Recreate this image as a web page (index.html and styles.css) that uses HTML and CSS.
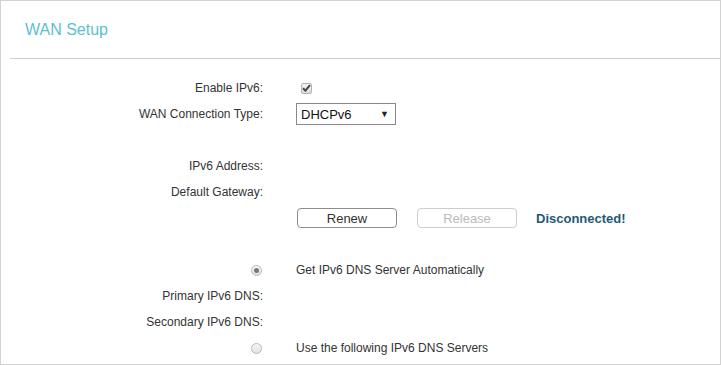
FILE: index.html
```html
<!DOCTYPE html>
<html lang="en">
<head>
    <meta charset="UTF-8">
    <title>WAN Setup</title>
    <link rel="stylesheet" href="styles.css">
</head>
<body>

<div class="panel">
    <div class="panel-head">
        <h2>WAN Setup</h2>
    </div>

    <div class="form-grid">
        <div class="form-label">Enable IPv6:</div>
        <div class="form-value">
            <span class="checkbox">
                <svg width="9" height="8" viewBox="0 0 9 8"><path d="M1 4.2 L3.4 6.6 L8 1.2" fill="none" stroke="#444" stroke-width="2"/></svg>
            </span>
        </div>

        <div class="form-label">WAN Connection Type:</div>
        <div class="form-value">
            <div class="select">
                <span>DHCPv6</span>
                <span class="select-arrow">&#9660;</span>
            </div>
        </div>

        <div class="form-label"></div>
        <div class="form-value"></div>

        <div class="form-label">IPv6 Address:</div>
        <div class="form-value"></div>

        <div class="form-label">Default Gateway:</div>
        <div class="form-value"></div>

        <div class="form-label"></div>
        <div class="form-value">
            <button class="btn">Renew</button>
            <button class="btn btn-disabled" disabled>Release</button>
            <span class="status">Disconnected!</span>
        </div>

        <div class="form-label"></div>
        <div class="form-value"></div>

        <div class="form-label"><span class="radio checked"></span></div>
        <div class="form-value">Get IPv6 DNS Server Automatically</div>

        <div class="form-label">Primary IPv6 DNS:</div>
        <div class="form-value"></div>

        <div class="form-label">Secondary IPv6 DNS:</div>
        <div class="form-value"></div>

        <div class="form-label"><span class="radio"></span></div>
        <div class="form-value">Use the following IPv6 DNS Servers</div>
    </div>
</div>

</body>
</html>
```

FILE: styles.css
```css
body {
    margin: 0;
    font-family: 'Liberation Sans', Arial, sans-serif;
    font-size: 12px;
    color: #333;
    background: #fff;
}
.panel {
    height: 365px;
    box-sizing: border-box;
    border: 1px solid #d2d2d2;
    overflow: hidden;
}
.panel-head {
    height: 57px;
    margin-left: 9px;
    border-bottom: 1px solid #cfcfcf;
    display: flex;
    align-items: center;
    padding-left: 15px;
}
.panel-head h2 {
    margin: 0;
    font-size: 16px;
    font-weight: normal;
    color: #5bbfcf;
}
.form-grid {
    display: grid;
    grid-template-columns: 262px 1fr;
    grid-auto-rows: 26px;
    column-gap: 33px;
    margin-top: 16px;
}
.form-label {
    display: flex;
    align-items: center;
    justify-content: flex-end;
}
.form-value {
    display: flex;
    align-items: center;
}
.checkbox {
    width: 11px;
    height: 11px;
    margin-left: 5px;
    box-sizing: border-box;
    border: 1px solid #b4b4b4;
    border-radius: 2px;
    background: linear-gradient(#f4f4f4, #dcdcdc);
    display: flex;
    align-items: center;
    justify-content: center;
}
.select {
    width: 100px;
    height: 22px;
    box-sizing: border-box;
    border: 1px solid #8a8a8a;
    display: flex;
    align-items: center;
    justify-content: space-between;
    padding: 0 6px 0 4px;
    font-size: 13px;
    color: #111;
}
.select-arrow {
    font-size: 9px;
    color: #222;
}
.btn {
    width: 100px;
    height: 20px;
    margin-left: 1px;
    margin-right: 19px;
    padding: 0;
    background: #fff;
    border: 1px solid #8c8c8c;
    border-radius: 4px;
    font-family: inherit;
    font-size: 13px;
    color: #333;
}
.btn-disabled {
    border-color: #cdcdcd;
    color: #bbb;
}
.status {
    font-size: 13px;
    font-weight: bold;
    color: #1f5a76;
}
.radio {
    width: 11px;
    height: 11px;
    margin-right: 1px;
    box-sizing: border-box;
    border: 1px solid #b8b8b8;
    border-radius: 50%;
    background: linear-gradient(#f7f7f7, #e2e2e2);
    display: flex;
    align-items: center;
    justify-content: center;
}
.radio.checked::after {
    content: "";
    width: 5px;
    height: 5px;
    border-radius: 50%;
    background: #777;
}
```
